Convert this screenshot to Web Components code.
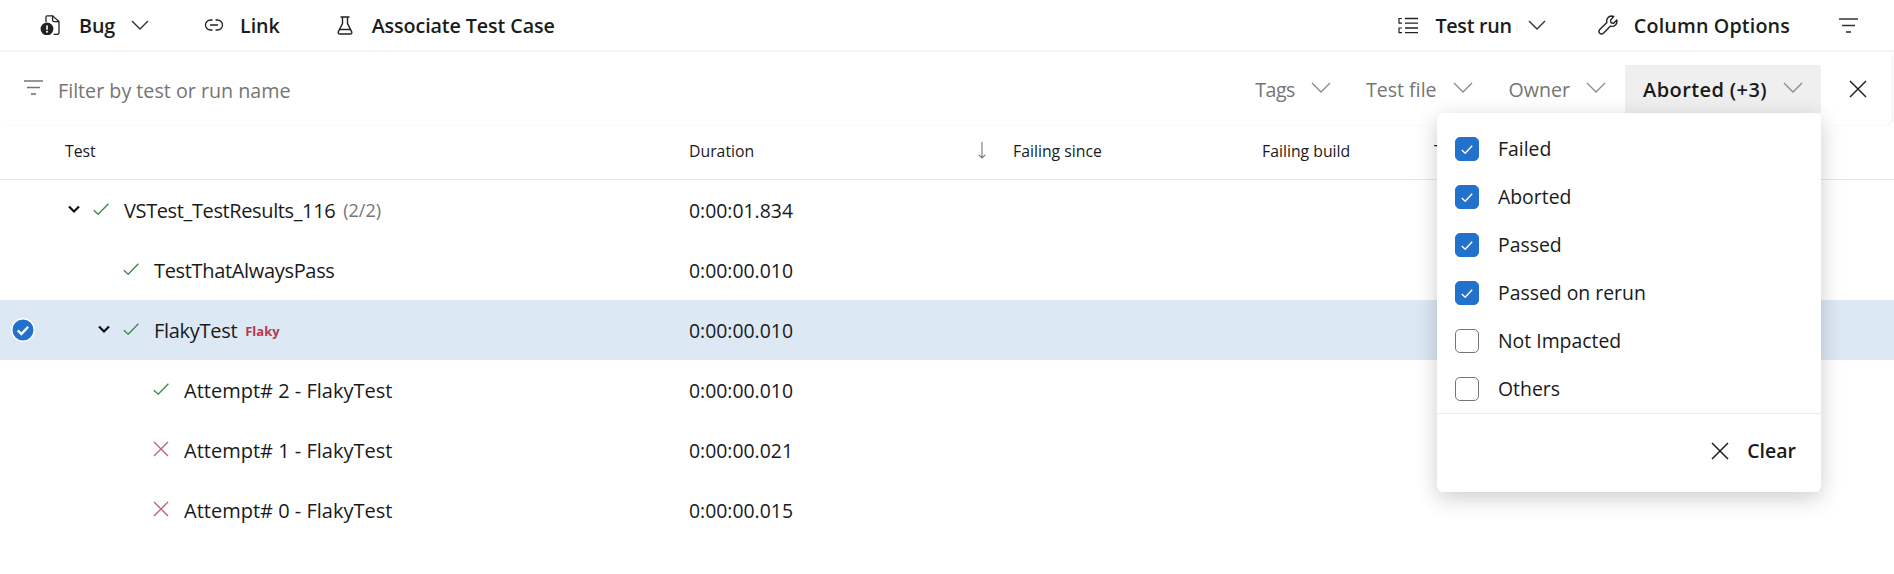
<!DOCTYPE html>
<html>
<head>
<meta charset="utf-8">
<title>Test results</title>
<style>
  html, body { margin: 0; padding: 0; background: #fff; }
  body { font-family: "Open Sans", "Noto Sans", sans-serif; color: #1a1a1a; width: 1894px; height: 574px; overflow: hidden; }
</style>
</head>
<body>
  <tr-toolbar>
    <tr-tool icon="bug" caret slot="left" style="--gap:19px">Bug</tr-tool>
    <tr-tool icon="link" slot="left" style="--gap:16px;margin-left:55px">Link</tr-tool>
    <tr-tool icon="flask" slot="left" style="--gap:17px;margin-left:55px">Associate Test Case</tr-tool>
    <tr-tool icon="list" caret slot="right" style="--gap:17px;--track:-.25px">Test run</tr-tool>
    <tr-tool icon="wrench" slot="right" style="--gap:16px;margin-left:52px;--track:.15px">Column Options</tr-tool>
    <tr-icon name="filter" slot="right" style="margin-left:49px;color:#333"></tr-icon>
  </tr-toolbar>

  <tr-filterbar placeholder="Filter by test or run name">
    <tr-drop style="margin-right:35px;letter-spacing:-.5px">Tags</tr-drop>
    <tr-drop style="margin-right:36px">Test file</tr-drop>
    <tr-drop style="margin-right:19px">Owner</tr-drop>
    <tr-drop active>Aborted (+3)
      <tr-menu slot="menu">
        <tr-check checked>Failed</tr-check>
        <tr-check checked>Aborted</tr-check>
        <tr-check checked>Passed</tr-check>
        <tr-check checked>Passed on rerun</tr-check>
        <tr-check>Not Impacted</tr-check>
        <tr-check>Others</tr-check>
      </tr-menu>
    </tr-drop>
  </tr-filterbar>

  <tr-header></tr-header>
  <tr-row level="0" status="pass" expandable count="(2/2)" duration="0:00:01.834" style="--track:-.38px">VSTest_TestResults_116</tr-row>
  <tr-row level="1" status="pass" duration="0:00:00.010" style="--track:-.33px">TestThatAlwaysPass</tr-row>
  <tr-row level="1" status="pass" expandable selected tag="Flaky" duration="0:00:00.010" style="--track:-.3px">FlakyTest</tr-row>
  <tr-row level="2" status="pass" duration="0:00:00.010">Attempt# 2 - FlakyTest</tr-row>
  <tr-row level="2" status="fail" duration="0:00:00.021">Attempt# 1 - FlakyTest</tr-row>
  <tr-row level="2" status="fail" duration="0:00:00.015">Attempt# 0 - FlakyTest</tr-row>

<script>
const ICONS = {
  bug: [20, 20, `<g fill="none" stroke="currentColor" stroke-width="1.3"><path d="M6 7V2.2Q6 .8 7.4 .8H12.6L19 6.6V17.6Q19 19.4 17.2 19.4H13.6"/><path d="M12.6 .8V5Q12.6 6.6 14.2 6.6H19"/></g><circle cx="7" cy="14" r="6.4" fill="currentColor"/><rect x="6.2" y="10.4" width="1.6" height="4.4" fill="#fff"/><circle cx="7" cy="16.7" r="1" fill="#fff"/>`],
  link: [20, 12, `<path d="M8 1H6.5a5 5 0 0 0 0 10H8M12 1h1.5a5 5 0 0 1 0 10H12M6.5 6h7" fill="none" stroke="currentColor" stroke-width="1.3" stroke-linecap="round"/>`],
  flask: [20, 19, `<path d="M6 1h8M7.5 1v6.5L3.4 15.6Q2.5 18 5 18H15Q17.5 18 16.6 15.6L12.5 7.5V1M5 13.5H15" fill="none" stroke="currentColor" stroke-width="1.4" stroke-linecap="round"/>`],
  list: [20, 17, `<path d="M7 1.5H20M7 6.2H20M7 11H20M7 15.7H20" fill="none" stroke="currentColor" stroke-width="1.3"/><path d="M4 1.5H1V6.2H4M4 11H1V15.7H4" fill="none" stroke="currentColor" stroke-width="1.2"/>`],
  wrench: [20, 20, `<path d="M13.6 1a5 5 0 0 0-4.7 6.5L1.8 14.6a2.5 2.5 0 0 0 3.6 3.6l7.1-7.1A5 5 0 0 0 18.8 5L15.6 8.2 13 7.7 12.5 5.1 15.7 1.5A5 5 0 0 0 13.6 1z" fill="none" stroke="currentColor" stroke-width="1.4" stroke-linejoin="round"/>`],
  filter: [19, 15, `<path d="M0 1H19M3 7.5H16" fill="none" stroke="currentColor" stroke-width="1.3"/><path d="M7 14H12" fill="none" stroke="currentColor" stroke-width="1.6"/>`],
  chevron: [18, 10, `<path d="M1 1L9 9L17 1" fill="none" stroke="currentColor" stroke-width="1.4"/>`],
  wide: [20, 11, `<path d="M1 1L10 10L19 1" fill="none" stroke="currentColor" stroke-width="1.3"/>`],
  caret: [12, 9, `<path d="M1 1.5L6 6.5L11 1.5" fill="none" stroke="currentColor" stroke-width="2.2"/>`],
  pass: [16, 12, `<path d="M.8 7.2L5.2 11.2L15.4 .8" fill="none" stroke="currentColor" stroke-width="1.4"/>`],
  fail: [16, 16, `<path d="M1 1L15 15M15 1L1 15" fill="none" stroke="currentColor" stroke-width="1.4"/>`],
  close: [18, 18, `<path d="M1 1L17 17M17 1L1 17" fill="none" stroke="currentColor" stroke-width="1.5"/>`],
  tick: [12, 9, `<path d="M.8 5L4.2 8.2L11.2 .8" fill="none" stroke="currentColor" stroke-width="1.4"/>`],
  down: [8, 17, `<path d="M4 0V16M.8 12.8L4 16L7.2 12.8" fill="none" stroke="currentColor" stroke-width="1.1"/>`],
  selected: [24, 24, `<circle cx="12" cy="12" r="11.2" fill="#2272cc" stroke="#fff" stroke-width="1.4"/><path d="M6.8 12.4L10.4 16L17.2 8.8" fill="none" stroke="#fff" stroke-width="2.4"/>`]
};

class TrIcon extends HTMLElement {
  connectedCallback() {
    const [w, h, body] = ICONS[this.getAttribute('name')];
    this.attachShadow({ mode: 'open' });
    this.shadowRoot.innerHTML = `
      <style>
        :host { display: inline-flex; flex: none; align-items: center; justify-content: center; line-height: 0; }
      </style>
      <svg width="${w}" height="${h}" viewBox="0 0 ${w} ${h}">${body}</svg>`;
  }
}

class TrToolbar extends HTMLElement {
  connectedCallback() {
    this.attachShadow({ mode: 'open' });
    this.shadowRoot.innerHTML = `
      <style>
        :host { display: flex; align-items: center; justify-content: space-between; height: 50px; border-bottom: 2px solid #f4f4f4; padding: 0 36px 0 40px; box-sizing: content-box; }
        .side { display: flex; align-items: center; }
      </style>
      <div class="side"><slot name="left"></slot></div>
      <div class="side"><slot name="right"></slot></div>`;
  }
}

class TrTool extends HTMLElement {
  connectedCallback() {
    const icon = this.getAttribute('icon');
    const caret = this.hasAttribute('caret');
    this.attachShadow({ mode: 'open' });
    this.shadowRoot.innerHTML = `
      <style>
        :host { display: inline-flex; align-items: center; font-size: 19.7px; font-weight: 600; color: #1c1c1c; white-space: nowrap; }
        .ic { width: 20px; display: flex; justify-content: center; margin-right: var(--gap, 18px); color: #222; }
        .lb { letter-spacing: var(--track, -0.1px); }
        .car { margin-left: 16px; color: #333; }
      </style>
      <span class="ic"><tr-icon name="${icon}"></tr-icon></span>
      <span class="lb"><slot></slot></span>
      ${caret ? '<tr-icon class="car" name="chevron"></tr-icon>' : ''}`;
  }
}

class TrFilterbar extends HTMLElement {
  connectedCallback() {
    this.attachShadow({ mode: 'open' });
    this.shadowRoot.innerHTML = `
      <style>
        :host { display: flex; align-items: center; height: 73px; margin-right: 2px; padding: 1px 25px 0 24px; box-sizing: border-box; background: #fff; border-radius: 0 0 8px 0; box-shadow: 2px 1px 2px -1px rgba(0,0,0,.07); position: relative; z-index: 2; }
        .ph { margin-left: 15px; font-size: 19.7px; color: #757575; padding-top: 3px; }
        .filter { color: #757575; margin-bottom: 3px; }
        .end { margin-left: auto; display: flex; align-items: center; }
        .x { margin-left: 28px; color: #222; }
      </style>
      <tr-icon class="filter" name="filter"></tr-icon>
      <span class="ph">${this.getAttribute('placeholder')}</span>
      <div class="end"><slot></slot><tr-icon class="x" name="close"></tr-icon></div>`;
  }
}

class TrDrop extends HTMLElement {
  connectedCallback() {
    const on = this.hasAttribute('active');
    this.attachShadow({ mode: 'open' });
    this.shadowRoot.innerHTML = `
      <style>
        :host { display: inline-flex; align-items: center; position: relative; font-size: 19.6px; color: #757575; white-space: nowrap; }
        :host([active]) { height: 48px; padding: 0 18px; background: #efefef; border-radius: 2px 2px 0 0; color: #1a1a1a; font-weight: 600; font-size: 20px; letter-spacing: .4px; }
        .car { margin-left: 16px; color: #8a8a8a; margin-bottom: 4px; }
        .menu { position: absolute; top: 100%; right: 0; letter-spacing: 0; }
      </style>
      <slot></slot><tr-icon class="car" name="wide"></tr-icon>
      ${on ? '<div class="menu"><slot name="menu"></slot></div>' : ''}`;
  }
}

class TrMenu extends HTMLElement {
  connectedCallback() {
    this.attachShadow({ mode: 'open' });
    this.shadowRoot.innerHTML = `
      <style>
        :host { display: block; width: 384px; height: 379px; background: #fff; border-radius: 6px; box-shadow: 0 6px 22px rgba(0,0,0,.2); box-sizing: border-box; color: #1a1a1a; font-weight: 400; }
        .items { display: flex; flex-direction: column; gap: 24px; padding: 24px 0 12px 18px; border-bottom: 1px solid #ececec; }
        .foot { display: flex; align-items: center; justify-content: flex-end; gap: 18px; padding: 23px 25px 0; font-weight: 600; font-size: 19.5px; }
      </style>
      <div class="items"><slot></slot></div>
      <div class="foot"><tr-icon name="close"></tr-icon><span>Clear</span></div>`;
  }
}

class TrCheck extends HTMLElement {
  connectedCallback() {
    this.attachShadow({ mode: 'open' });
    this.shadowRoot.innerHTML = `
      <style>
        :host { display: flex; align-items: center; gap: 19px; height: 24px; font-size: 19.4px; }
        .box { width: 24px; height: 24px; box-sizing: border-box; border: 1px solid #767676; border-radius: 5px; display: flex; align-items: center; justify-content: center; color: #fff; }
        :host([checked]) .box { background: #2272cc; border-color: #2272cc; }
        .lb { padding-bottom: 2px; }
      </style>
      <span class="box">${this.hasAttribute('checked') ? '<tr-icon name="tick"></tr-icon>' : ''}</span>
      <span class="lb"><slot></slot></span>`;
  }
}

class TrHeader extends HTMLElement {
  connectedCallback() {
    this.attachShadow({ mode: 'open' });
    this.shadowRoot.innerHTML = `
      <style>
        :host { display: grid; grid-template-columns: 689px 324px 249px 172px 1fr; align-items: center; height: 51px; padding-bottom: 3px; border-bottom: 1px solid #e6e6e6; font-size: 15.8px; color: #1a1a1a; box-sizing: content-box; }
        .test { padding-left: 65px; }
        .dur { display: flex; justify-content: space-between; padding-right: 27px; }
        .down { color: #777; }
      </style>
      <div class="test">Test</div>
      <div class="dur"><span>Duration</span><tr-icon class="down" name="down"></tr-icon></div>
      <div>Failing since</div>
      <div>Failing build</div>
      <div>T</div>`;
  }
}

class TrRow extends HTMLElement {
  connectedCallback() {
    const level = Number(this.getAttribute('level') || 0);
    const status = this.getAttribute('status');
    const count = this.getAttribute('count');
    const tag = this.getAttribute('tag');
    this.attachShadow({ mode: 'open' });
    this.shadowRoot.innerHTML = `
      <style>
        :host { display: grid; grid-template-columns: 689px 1fr; height: 60px; align-items: center; font-size: 20px; color: #1a1a1a; }
        :host([selected]) { background: #dde8f5; }
        .name { display: flex; align-items: center; padding-left: 11px; }
        .sel { width: 24px; height: 24px; flex: none; margin-right: ${33 + 30 * level}px; }
        .exp { width: 12px; flex: none; margin-right: 13px; margin-bottom: 2px; color: #111; display: flex; }
        .st { width: 16px; margin-right: 15px; flex: none; display: flex; margin-bottom: 3px; }
        .pass { color: #3f8a4c; }
        .fail { color: #b4686f; }
        .lb { letter-spacing: var(--track, 0); }
        .dur { font-size: 19.4px; }
        .count { margin-left: 8px; font-size: 18px; color: #767676; }
        .tag { margin-left: 8px; font-size: 13px; font-weight: 700; color: #b5384f; padding-top: 1px; }
      </style>
      <div class="name">
        <span class="sel">${this.hasAttribute('selected') ? '<tr-icon name="selected"></tr-icon>' : ''}</span>
        <span class="exp">${this.hasAttribute('expandable') ? '<tr-icon name="caret"></tr-icon>' : ''}</span>
        <span class="st ${status}"><tr-icon name="${status}"></tr-icon></span>
        <span class="lb"><slot></slot></span>
        ${count ? `<span class="count">${count}</span>` : ''}
        ${tag ? `<span class="tag">${tag}</span>` : ''}
      </div>
      <div class="dur">${this.getAttribute('duration')}</div>`;
  }
}

customElements.define('tr-icon', TrIcon);
customElements.define('tr-toolbar', TrToolbar);
customElements.define('tr-tool', TrTool);
customElements.define('tr-filterbar', TrFilterbar);
customElements.define('tr-drop', TrDrop);
customElements.define('tr-menu', TrMenu);
customElements.define('tr-check', TrCheck);
customElements.define('tr-header', TrHeader);
customElements.define('tr-row', TrRow);
</script>
</body>
</html>
